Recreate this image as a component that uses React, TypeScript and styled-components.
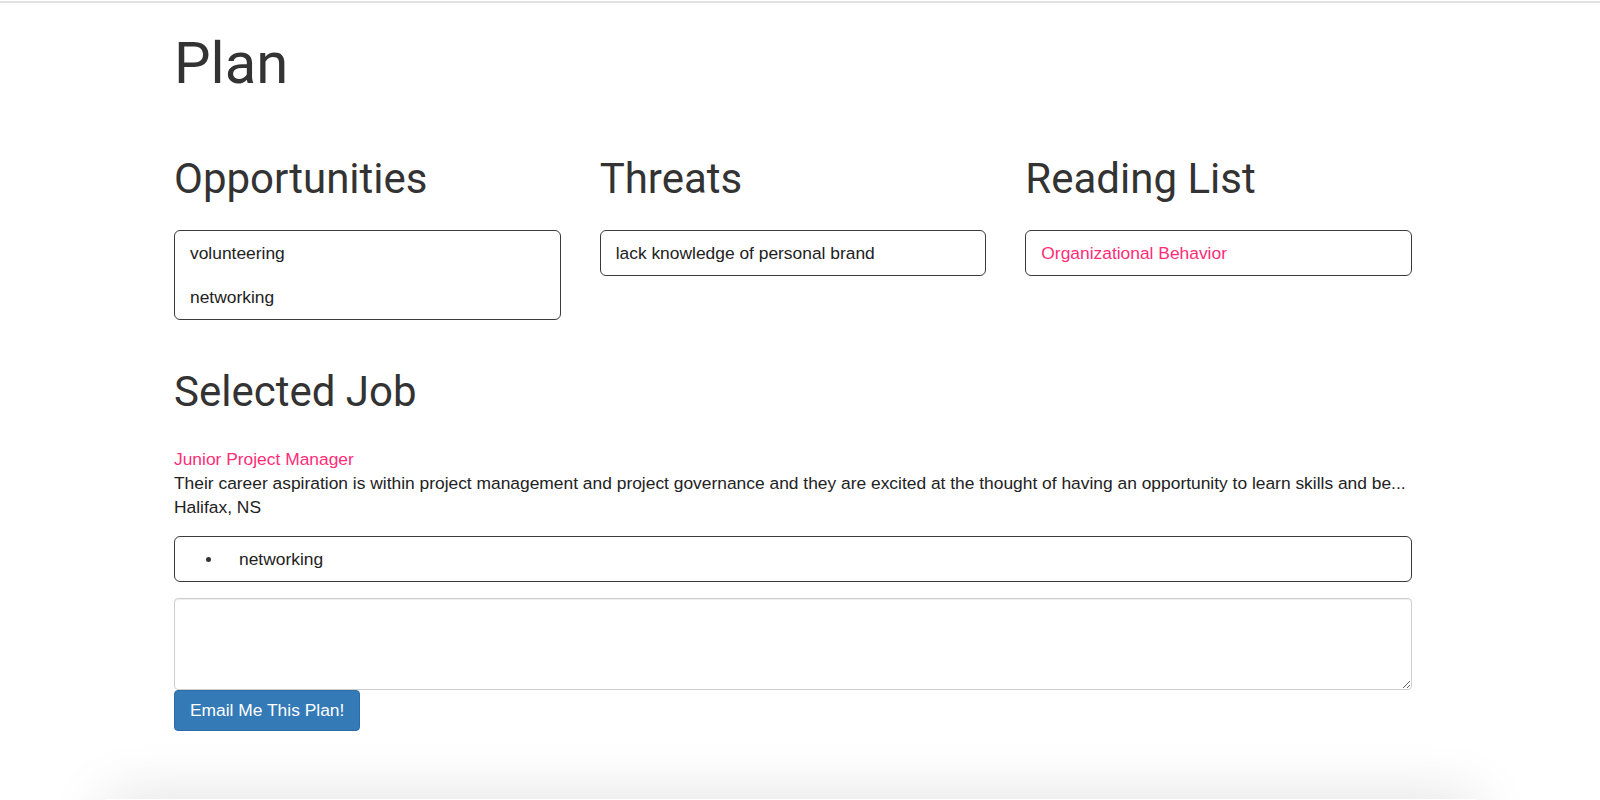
import styled, { createGlobalStyle } from 'styled-components';

const GlobalStyle = createGlobalStyle`
  html { overflow: hidden; }
  body {
    margin: 0;
    background: #fff;
    font-family: "Liberation Sans", Arial, sans-serif;
    font-size: 17.4px;
    line-height: 24px;
    color: #222;
  }
`;

const TopRule = styled.div`
  margin-top: 1px;
  height: 2px;
  background: #e2e2e2;
`;

const Page = styled.main`
  width: 1238px;
  margin-left: 174px;
  padding-top: 28px;
`;

const Title = styled.h1`
  margin: 0 0 61px;
  font-family: Roboto, "Liberation Sans", sans-serif;
  font-weight: 400;
  font-size: 58px;
  line-height: 64px;
  color: #333;
`;

const Heading = styled.h2<{ $gap?: number }>`
  margin: 0 0 ${p => p.$gap ?? 28}px;
  font-family: Roboto, "Liberation Sans", sans-serif;
  font-weight: 400;
  font-size: 42px;
  line-height: 46px;
  color: #333;
`;

const Columns = styled.section`
  display: grid;
  grid-template-columns: repeat(3, 1fr);
  column-gap: 39px;
  margin-bottom: 49px;
`;

const Column = styled.div`
  display: flex;
  flex-direction: column;
`;

const ListBox = styled.ul`
  margin: 0;
  padding: 0;
  list-style: none;
  border: 1px solid #3a3a3a;
  border-radius: 6px;
`;

const Item = styled.li<{ $pink?: boolean; $bullet?: boolean }>`
  display: flex;
  align-items: center;
  height: 44px;
  padding: 0 15px;
  color: ${p => (p.$pink ? '#ff2d78' : '#222')};

  ${p =>
    p.$bullet &&
    `
    &::before {
      content: '';
      width: 5px;
      height: 5px;
      border-radius: 50%;
      background: #333;
      margin: 0 28px 0 16px;
    }
  `}
`;

const Job = styled.div`
  margin-bottom: 17px;
`;

const JobTitle = styled.div`
  color: #ff2d78;
`;

const JobText = styled.div`
  color: #222;
  white-space: nowrap;
`;

const Notes = styled.textarea`
  display: block;
  box-sizing: border-box;
  width: 100%;
  height: 92px;
  margin: 16px 0 0;
  padding: 7px 14px;
  border: 1px solid #cfcfcf;
  border-radius: 4px;
  box-shadow: inset 0 1px 1px rgba(0, 0, 0, 0.075);
  font: inherit;
  resize: vertical;
  outline: none;
`;

const EmailButton = styled.button`
  display: block;
  height: 41px;
  margin: 0;
  padding: 0 15px;
  border: 1px solid #2e6da4;
  border-radius: 4px;
  background: #337ab7;
  color: #fff;
  font-family: "Liberation Sans", Arial, sans-serif;
  font-size: 17.4px;
  cursor: pointer;
`;

const Footer = styled.footer`
  width: 1370px;
  height: 60px;
  margin: 68px 0 0 106px;
  background: #fff;
  box-shadow: 0 0 60px rgba(0, 0, 0, 0.13);
`;

const columns = [
  { title: 'Opportunities', items: ['volunteering', 'networking'], pink: false },
  { title: 'Threats', items: ['lack knowledge of personal brand'], pink: false },
  { title: 'Reading List', items: ['Organizational Behavior'], pink: true },
];

export default function App() {
  return (
    <>
      <GlobalStyle />
      <TopRule />
      <Page>
        <Title>Plan</Title>
        <Columns>
          {columns.map(col => (
            <Column key={col.title}>
              <Heading>{col.title}</Heading>
              <ListBox>
                {col.items.map(item => (
                  <Item key={item} $pink={col.pink}>
                    {item}
                  </Item>
                ))}
              </ListBox>
            </Column>
          ))}
        </Columns>

        <Heading $gap={32}>Selected Job</Heading>
        <Job>
          <JobTitle>Junior Project Manager</JobTitle>
          <JobText>
            Their career aspiration is within project management and project governance and they are
            excited at the thought of having an opportunity to learn skills and be...
          </JobText>
          <JobText>Halifax, NS</JobText>
        </Job>
        <ListBox>
          <Item $bullet>networking</Item>
        </ListBox>
        <Notes />
        <EmailButton>Email Me This Plan!</EmailButton>
      </Page>
      <Footer />
    </>
  );
}
